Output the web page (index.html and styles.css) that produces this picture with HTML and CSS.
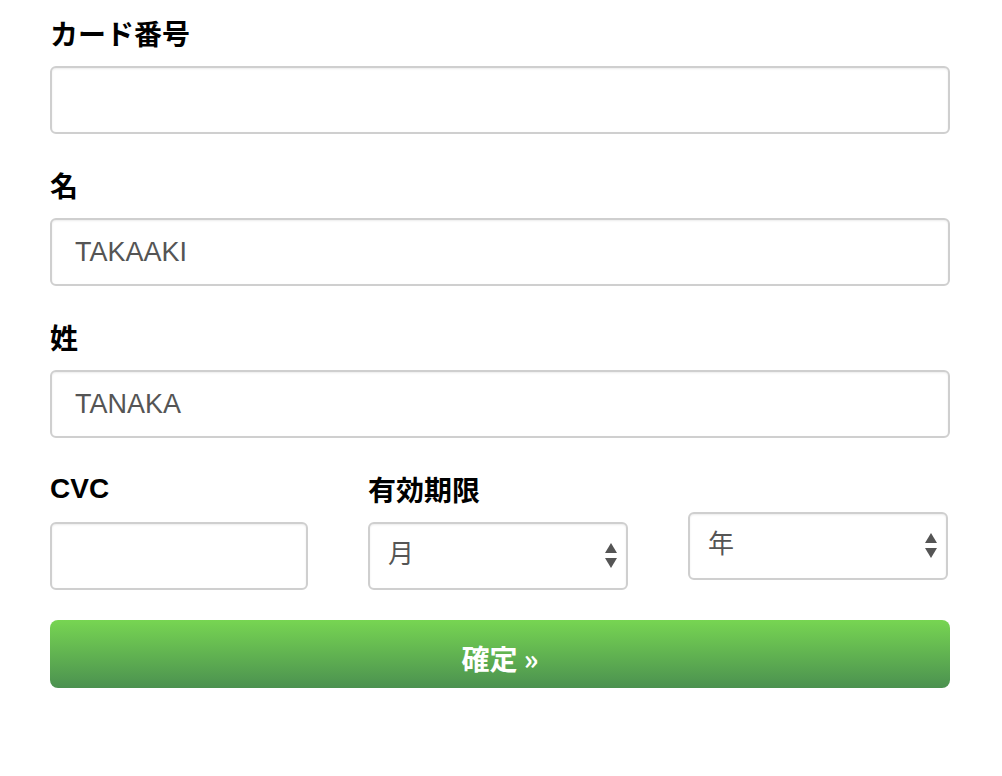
FILE: index.html
```html
<!DOCTYPE html>
<html lang="ja">
<head>
<meta charset="utf-8">
<title>カード情報</title>
<link rel="stylesheet" href="styles.css">
</head>
<body>
<form class="form">
  <div class="group">
    <label class="label">カード番号</label>
    <input class="field" type="text" value="">
  </div>
  <div class="group">
    <label class="label">名</label>
    <input class="field" type="text" value="TAKAAKI">
  </div>
  <div class="group">
    <label class="label">姓</label>
    <input class="field" type="text" value="TANAKA">
  </div>
  <div class="row">
    <div class="col">
      <label class="label latin">CVC</label>
      <input class="field" type="text" value="">
    </div>
    <div class="col">
      <label class="label">有効期限</label>
      <div class="select-wrap">
        <select class="select month"><option>月</option></select>
        <svg class="arrows" width="14" height="28" viewBox="0 0 14 28"><path d="M7 1 L13 11 L1 11 Z" fill="#555"/><path d="M1 16 L13 16 L7 26 Z" fill="#555"/></svg>
      </div>
    </div>
    <div class="col">
      <div class="spacer"></div>
      <div class="select-wrap">
        <select class="select year"><option>年</option></select>
        <svg class="arrows" width="14" height="28" viewBox="0 0 14 28"><path d="M7 1 L13 11 L1 11 Z" fill="#555"/><path d="M1 16 L13 16 L7 26 Z" fill="#555"/></svg>
      </div>
    </div>
  </div>
  <button class="submit" type="button">確定 »</button>
</form>
</body>
</html>
```
FILE: styles.css
```css
html, body {
  margin: 0;
  padding: 0;
  background: #fff;
}
body {
  font-family: "Liberation Sans", "Noto Sans CJK JP", sans-serif;
  color: #000;
}
.form {
  width: 900px;
  margin-left: 50px;
  padding-top: 13px;
}
.group {
  display: flex;
  flex-direction: column;
  margin-bottom: 31px;
}
.label {
  display: block;
  font-family: "Noto Sans CJK JP", sans-serif;
  font-size: 28px;
  font-weight: 700;
  line-height: 40px;
  height: 40px;
  margin-bottom: 13px;
}
.label.latin {
  font-family: "Liberation Sans", Arial, sans-serif;
  font-size: 28px;
}
.field {
  box-sizing: border-box;
  height: 68px;
  width: 100%;
  border: 2px solid #cfcfcf;
  border-radius: 6px;
  box-shadow: inset 0 1px 2px rgba(0,0,0,0.08);
  padding: 0 23px;
  font-family: "Liberation Sans", "Noto Sans CJK JP", sans-serif;
  font-size: 27px;
  color: #555;
  background: #fff;
  outline: none;
}
.row {
  display: grid;
  grid-template-columns: 258px 260px 260px;
  column-gap: 60px;
  margin-bottom: 30px;
}
.col {
  display: flex;
  flex-direction: column;
}
.spacer {
  height: 30px;
  margin-bottom: 13px;
}
.select-wrap {
  position: relative;
  height: 68px;
}
.select {
  -webkit-appearance: none;
  appearance: none;
  box-sizing: border-box;
  width: 100%;
  height: 68px;
  border: 2px solid #cfcfcf;
  border-radius: 6px;
  box-shadow: inset 0 1px 2px rgba(0,0,0,0.08);
  padding: 0 40px 10px 18px;
  font-family: "Noto Sans CJK JP", sans-serif;
  font-size: 26px;
  color: #555;
  background: #fff;
  outline: none;
}
.arrows {
  position: absolute;
  right: 10px;
  top: 20px;
}
.submit {
  display: block;
  box-sizing: border-box;
  width: 900px;
  height: 68px;
  border: none;
  border-radius: 8px;
  background: linear-gradient(to bottom, #77d552 0%, #4b9150 100%);
  color: #fff;
  font-family: "Noto Sans CJK JP", sans-serif;
  font-size: 28px;
  font-weight: 700;
  padding: 8px 0 0 0;
  cursor: pointer;
}
```
